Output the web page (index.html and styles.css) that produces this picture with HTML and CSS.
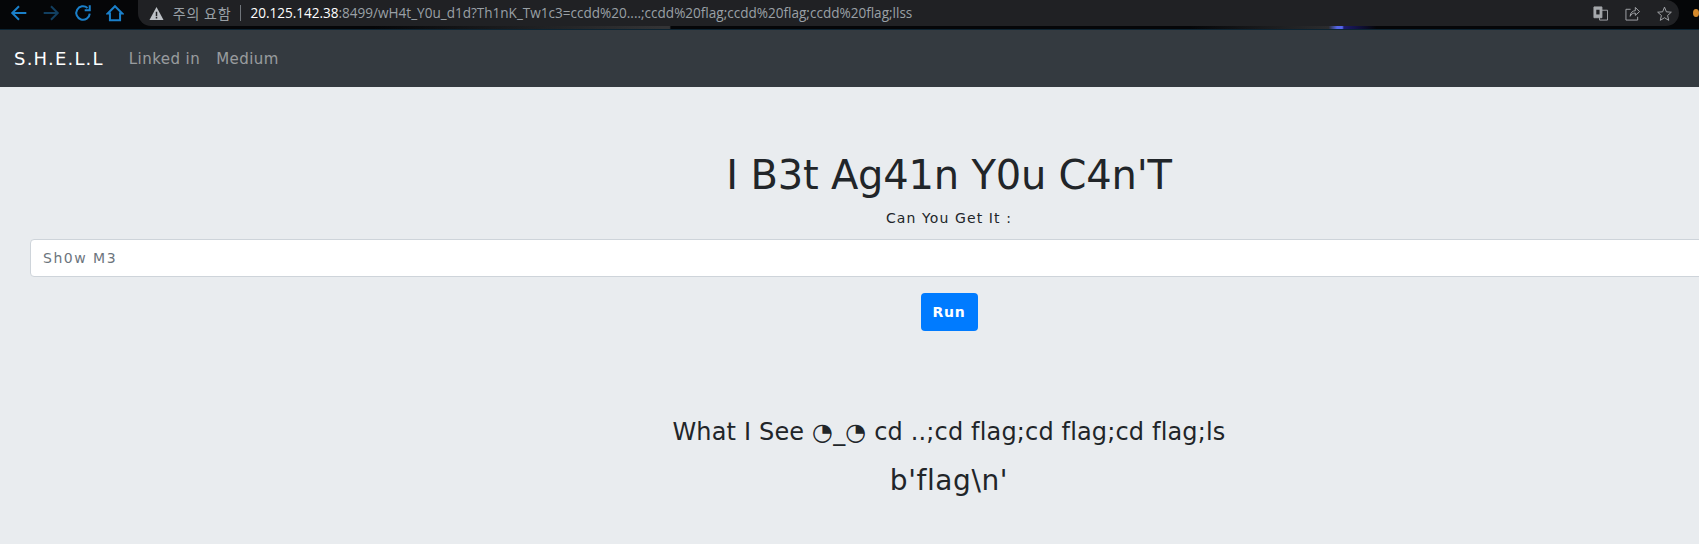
FILE: index.html
```html
<!doctype html>
<html lang="en">

<head>
    <title>S.H.E.L.L</title>
    <link rel="stylesheet" href="styles.css">
</head>

<body>

    <div class="toolbar">
        <div class="toolbar-nav">
            <svg class="nav-icon" viewBox="0 0 16 16"><path d="M14.500 8H2.500M8 2 2 8 8 14" /></svg>
            <svg class="nav-icon nav-off" viewBox="0 0 16 16"><path d="M1.500 8h12M8 2l6 6-6 6" /></svg>
            <svg class="nav-icon" viewBox="0 0 16 16"><path d="M14 8.500A6 6 0 1 1 12 3.500M14 1v4.500H9.500" /></svg>
            <svg class="nav-icon" viewBox="0 0 16 16"><path d="M1.500 8.500 8 2 14.500 8.500H12.500V14.500H3.500V8.500Z" /></svg>
        </div>
        <div class="omnibox">
            <svg class="warn-icon" viewBox="0 0 16 16"><path d="M8 1 15.500 15H.5Z" /><path class="warn-mark" d="M7.200 6h1.600v4.800H7.200ZM7.200 11.600h1.600v1.600H7.200Z" /></svg>
            <span class="warn-text">주의 요함</span>
            <span class="url"><b>20.125.142.38</b>:8499/wH4t_Y0u_d1d?Th1nK_Tw1c3=ccdd%20....;ccdd%20flag;ccdd%20flag;ccdd%20flag;llss</span>
            <div class="omni-icons">
                <svg class="omni-icon" viewBox="0 0 16 16"><path class="fill" d="M1 1h8.500v11.500H1Z" /><path d="M7 4.500h8.500V15H7Z" /><path class="gap" d="M3.500 4h3.500v5H3.500Z" /></svg>
                <svg class="omni-icon" viewBox="0 0 16 16"><path d="M6 3.500H1v11.500h12.500V11.500M5.500 11c0-4 3-6 5.500-6V1.500L15.500 6 11 10V7.500c-2.500 0-4.500 1-5.500 3.500Z" /></svg>
                <svg class="omni-icon" viewBox="0 0 16 16"><path d="m8 1.200 2 5 5.300.4-4 3.500 1.200 5.200L8 12.500l-4.500 2.800 1.200-5.200-4-3.500L6 6.200Z" /></svg>
            </div>
        </div>
        <span class="ext-dot"></span>
    </div>
    <div class="toolbar-strip"></div>

    <nav class="navbar">
        <a class="brand" href="#">S.H.E.L.L</a>
        <a class="nav-link" href="#">Linked in</a>
        <a class="nav-link" href="#">Medium</a>
    </nav>

    <div class="jumbotron">
        <h1>I B3t Ag41n Y0u C4n'T</h1>
        <label for="cmd">Can You Get It :</label>
        <input type="text" id="cmd" placeholder="Sh0w M3">
        <button>Run</button>
        <h4>What I See ◔_◔ cd ..;cd flag;cd flag;cd flag;ls</h4>
        <h3>b'flag\n'</h3>
    </div>

</body>

</html>
```

FILE: styles.css
```css
html,
body {
    margin: 0;
    padding: 0;
    height: 544px;
    overflow: hidden;
    background-color: #e9ecef;
}

body {
    font-family: "DejaVu Sans", sans-serif;
    color: #212529;
}

/* browser chrome */
.toolbar {
    display: flex;
    align-items: center;
    height: 26px;
    background-color: #050608;
}

.toolbar-nav {
    display: flex;
    align-items: center;
    gap: 14px;
    width: 138px;
    padding-left: 10px;
    box-sizing: border-box;
}

.nav-icon {
    width: 18px;
    height: 18px;
    fill: none;
    stroke: #1a7fc9;
    stroke-width: 1.800;
}

.nav-off {
    stroke: #123f60;
}

.omnibox {
    display: flex;
    align-items: center;
    width: 1544px;
    height: 26px;
    padding-left: 11px;
    box-sizing: border-box;
    background-color: #202124;
    border-radius: 0 13px 13px 13px;
}

.warn-icon {
    width: 15px;
    height: 15px;
    fill: #bdc1c6;
}

.warn-mark {
    fill: #202124;
}

.warn-text {
    margin-left: 9px;
    padding-right: 9px;
    border-right: 1px solid #70757a;
    font-family: "Noto Sans CJK KR", sans-serif;
    font-size: 14px;
    line-height: 16px;
    letter-spacing: 0.800px;
    color: #9aa0a6;
}

.url {
    margin-left: 9px;
    font-family: "Open Sans", sans-serif;
    font-size: 13.560px;
    color: #9aa0a6;
    white-space: nowrap;
}

.url b {
    font-weight: 400;
    color: #fff;
}

.omni-icons {
    display: flex;
    gap: 17px;
    margin-left: auto;
    padding-right: 7px;
}

.omni-icon {
    width: 15px;
    height: 15px;
    fill: none;
    stroke: #a5a8ac;
    stroke-width: 1;
}

.omni-icon .fill {
    fill: #a5a8ac;
}

.omni-icon .gap {
    fill: #202124;
    stroke: none;
}

.ext-dot {
    width: 6px;
    height: 8px;
    margin-left: 14px;
    border-radius: 50%;
    background-color: #d68a2c;
}

.toolbar-strip {
    height: 4px;
    background: linear-gradient(to right, #050608 22%, #333436 39%, #333436 39.400%, #050608 39.500%, #050608 70%, #2b2c2e 78.200%, #5566e8 78.700%, #5566e8 79%, #1c1a6c 79.100%, #050608 81%);
    border-bottom: 1px solid #0c2433;
    box-sizing: border-box;
}

/* page */
.navbar {
    display: flex;
    align-items: center;
    height: 57px;
    padding-left: 14px;
    background-color: #343a40;
}

.brand {
    margin-right: 25px;
    font-size: 18px;
    letter-spacing: 1.200px;
    color: #fff;
    text-decoration: none;
}

.nav-link {
    margin-right: 16px;
    font-size: 15px;
    letter-spacing: 0.450px;
    color: rgba(255, 255, 255, 0.5);
    text-decoration: none;
}

.jumbotron {
    display: flex;
    flex-direction: column;
    align-items: center;
    width: 1898px;
    padding: 64px 30px 0;
    box-sizing: border-box;
    border-radius: 4px 0 0 0;
    background-color: #e9ecef;
}

h1 {
    margin: 0;
    font-size: 40px;
    font-weight: 500;
    line-height: 48px;
    letter-spacing: -0.200px;
}

label {
    margin-top: 9px;
    margin-bottom: 10px;
    font-size: 14px;
    line-height: 21px;
    letter-spacing: 1.100px;
}

input[type="text"] {
    width: 100%;
    height: 38px;
    padding: 6px 12px;
    box-sizing: border-box;
    font-family: inherit;
    font-size: 14px;
    letter-spacing: 1.500px;
    background-color: #fff;
    border: 1px solid #ced4da;
    border-radius: 4px;
}

input::placeholder {
    color: #6c757d;
}

button {
    width: 57px;
    height: 38px;
    margin-top: 16px;
    padding: 0;
    font-family: inherit;
    font-size: 14px;
    font-weight: 600;
    letter-spacing: 0.800px;
    color: #fff;
    background-color: #007bff;
    border: none;
    border-radius: 4px;
}

h4 {
    margin: 87px 0 0;
    font-size: 24px;
    font-weight: 500;
    line-height: 29px;
    letter-spacing: 0.160px;
}

h3 {
    margin: 17px 0 0;
    font-size: 28px;
    font-weight: 500;
    line-height: 34px;
    letter-spacing: 0.600px;
}
```
